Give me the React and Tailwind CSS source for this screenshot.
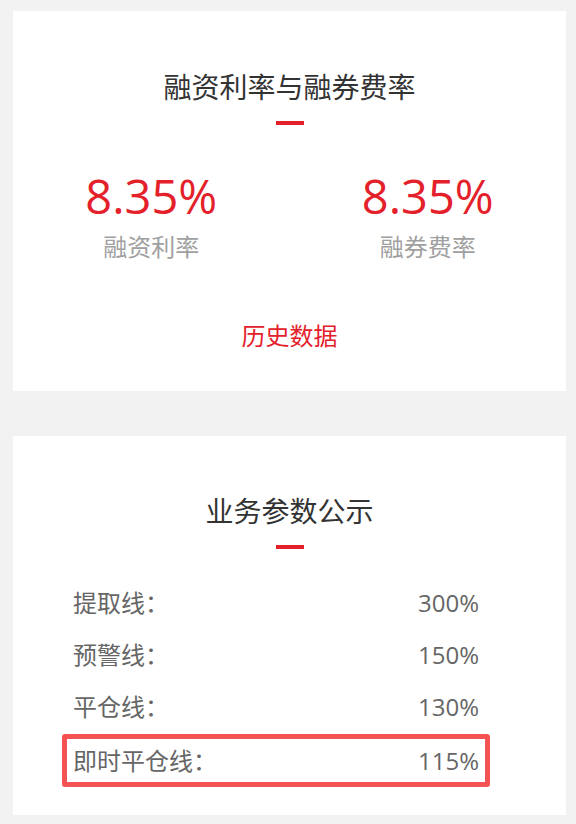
export default function App() {
  const rows = [
    ["提取线：", "300%"],
    ["预警线：", "150%"],
    ["平仓线：", "130%"],
  ];
  return (
    <div className="min-h-screen bg-[#f2f2f2] pl-[13px] pr-[10px] pt-[11px] font-['Open_Sans','Noto_Sans_CJK_SC',sans-serif]">
      <div className="h-[380px] bg-white flex flex-col items-center pt-[62px]">
        <div className="text-[28px] leading-[28px] text-[#333]">融资利率与融券费率</div>
        <div className="mt-[20px] h-[4px] w-[28px] bg-[#e4212b]" />
        <div className="mt-[48px] grid w-full grid-cols-2">
          <div className="flex flex-col items-center">
            <div className="text-[47px] leading-[47px] text-[#e4212b]">8.35%</div>
            <div className="mt-[15px] text-[24px] leading-[24px] text-[#a0a0a0]">融资利率</div>
          </div>
          <div className="flex flex-col items-center">
            <div className="text-[47px] leading-[47px] text-[#e4212b]">8.35%</div>
            <div className="mt-[15px] text-[24px] leading-[24px] text-[#a0a0a0]">融券费率</div>
          </div>
        </div>
        <div className="mt-[65px] text-[24px] leading-[24px] text-[#e4212b]">历史数据</div>
      </div>
      <div className="mt-[45px] h-[379px] bg-white flex flex-col items-center pt-[61px]">
        <div className="text-[28px] leading-[28px] text-[#333]">业务参数公示</div>
        <div className="mt-[20px] h-[4px] w-[28px] bg-[#e4212b]" />
        <div className="mt-[28px] flex w-full flex-col pl-[49px] pr-[76px]">
          {rows.map(([k, v]) => (
            <div key={k} className="flex h-[52px] items-center justify-between border-[5px] border-transparent px-[6px] text-[24px] text-[#666]">
              <span>{k}</span>
              <span>{v}</span>
            </div>
          ))}
          <div className="mt-[1px] flex h-[53px] items-center justify-between rounded-[3px] border-[5px] border-[#f55353] px-[6px] text-[24px] text-[#666]">
            <span>即时平仓线：</span>
            <span>115%</span>
          </div>
        </div>
      </div>
    </div>
  );
}
